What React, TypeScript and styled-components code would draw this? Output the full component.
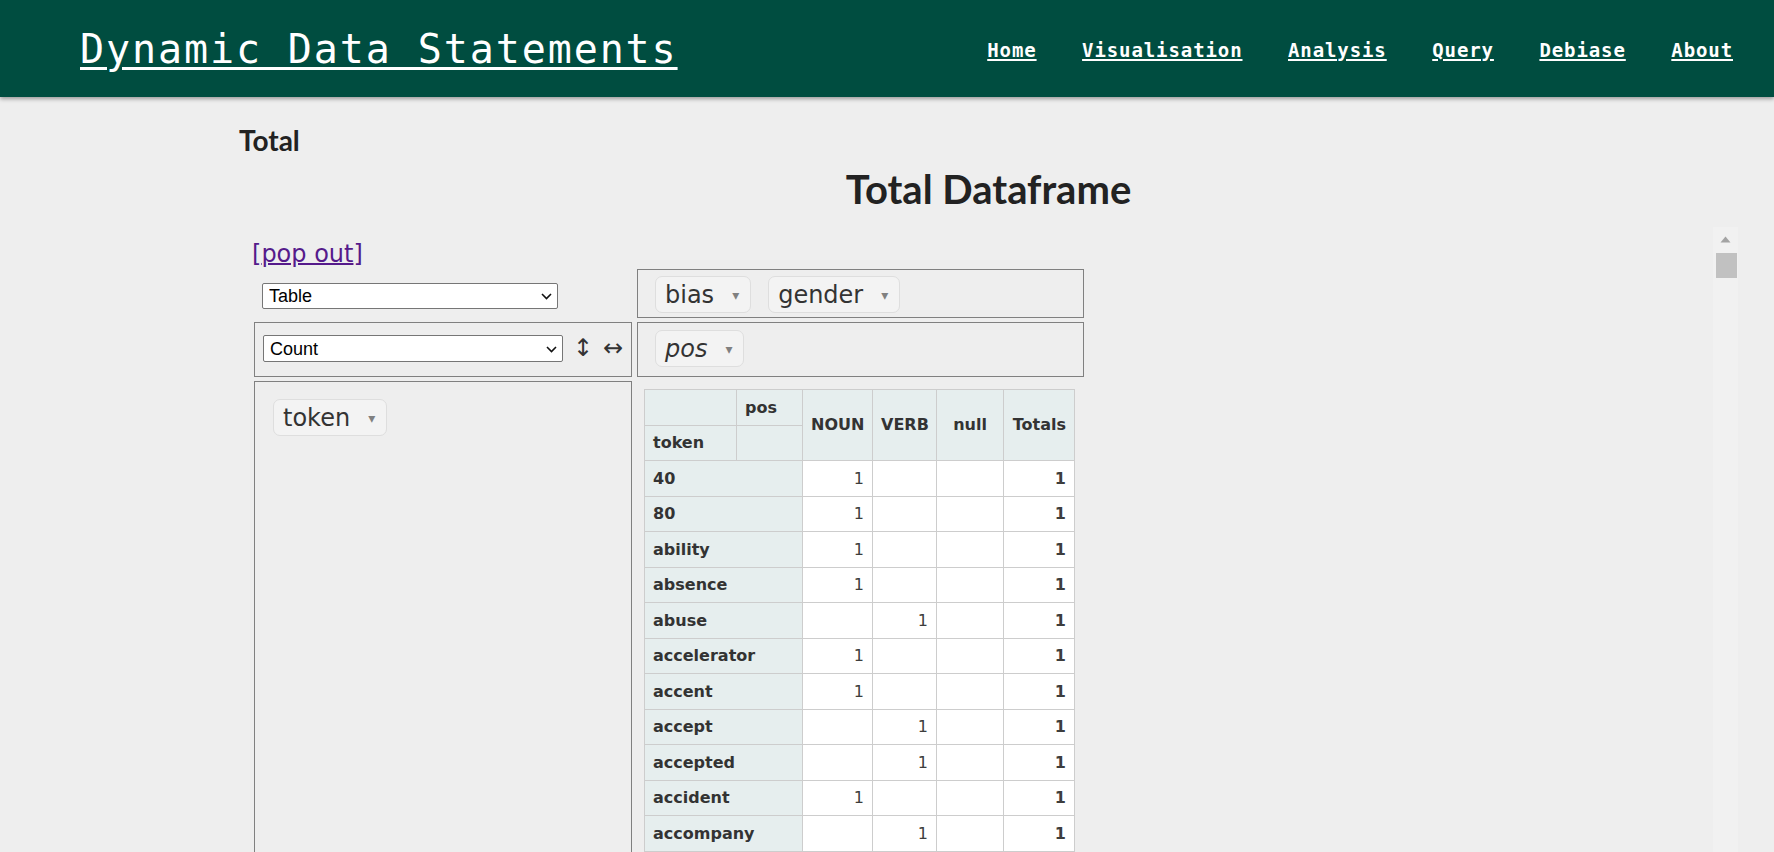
import React from "react"
import styled, { createGlobalStyle } from "styled-components"

type Pos = "NOUN" | "VERB" | "null"

const navLinks = ["Home", "Visualisation", "Analysis", "Query", "Debiase", "About"]

const rows: { token: string; pos: Pos }[] = [
  { token: "40", pos: "NOUN" },
  { token: "80", pos: "NOUN" },
  { token: "ability", pos: "NOUN" },
  { token: "absence", pos: "NOUN" },
  { token: "abuse", pos: "VERB" },
  { token: "accelerator", pos: "NOUN" },
  { token: "accent", pos: "NOUN" },
  { token: "accept", pos: "VERB" },
  { token: "accepted", pos: "VERB" },
  { token: "accident", pos: "NOUN" },
  { token: "accompany", pos: "VERB" },
  { token: "account", pos: "NOUN" },
  { token: "accurate", pos: "null" },
]

const posColumns: Pos[] = ["NOUN", "VERB", "null"]
const colWidths = [92, 66, 70, 64, 67, 71]

function App(): JSX.Element {
  return (
    <>
      <GlobalStyle />
      <Header>
        <Brand href="#">Dynamic Data Statements</Brand>
        <Nav>
          {navLinks.map((link) => (
            <NavLink key={link} href="#">
              {link}
            </NavLink>
          ))}
        </Nav>
      </Header>
      <Main>
        <SectionTitle>Total</SectionTitle>
        <FrameTitle>Total Dataframe</FrameTitle>
        <Frame>
          <FrameBody>
            <PopOut href="#">
              [<u>pop out</u>]
            </PopOut>
            <PivotGrid>
              <RendererCell>
                <Dropdown width={296} height={26} value="Table" options={["Table", "Table Heatmap", "Bar Chart"]} />
              </RendererCell>
              <AxisBox $pad="6px 17px" $gap={17}>
                <Pill label="bias" />
                <Pill label="gender" />
              </AxisBox>
              <AxisBox $pad="12px 8px">
                <ValsRow>
                  <Dropdown width={300} height={27} value="Count" options={["Count", "Count Unique Values", "Sum"]} />
                  <OrderToggle $offset={9}>↕</OrderToggle>
                  <OrderToggle $offset={8}>↔</OrderToggle>
                </ValsRow>
              </AxisBox>
              <AxisBox $pad="7px 17px" $gap={17}>
                <Pill label="pos" italic />
              </AxisBox>
              <AxisBox $pad="17px 18px" $vertical>
                <Pill label="token" />
              </AxisBox>
              <OutputCell>
                <PivotTable>
                  <colgroup>
                    {colWidths.map((w, i) => (
                      <Col key={i} $w={w} />
                    ))}
                  </colgroup>
                  <thead>
                    <tr>
                      <HeadCell />
                      <HeadCell>pos</HeadCell>
                      {posColumns.map((p) => (
                        <HeadCell key={p} rowSpan={2} $align="center">
                          {p}
                        </HeadCell>
                      ))}
                      <HeadCell rowSpan={2} $align="right">
                        Totals
                      </HeadCell>
                    </tr>
                    <tr>
                      <HeadCell>token</HeadCell>
                      <HeadCell />
                    </tr>
                  </thead>
                  <tbody>
                    {rows.map((row) => (
                      <tr key={row.token}>
                        <HeadCell colSpan={2}>{row.token}</HeadCell>
                        {posColumns.map((p) => (
                          <ValueCell key={p}>{row.pos === p ? 1 : ""}</ValueCell>
                        ))}
                        <ValueCell $total>1</ValueCell>
                      </tr>
                    ))}
                  </tbody>
                </PivotTable>
              </OutputCell>
            </PivotGrid>
          </FrameBody>
          <ScrollTrack>
            <ScrollButton>
              <svg width="11" height="7" viewBox="0 0 11 7">
                <path d="M5.5 0.5 L10.5 6.5 L0.5 6.5 Z" fill="#a3a3a3" />
              </svg>
            </ScrollButton>
            <ScrollThumb />
          </ScrollTrack>
        </Frame>
      </Main>
    </>
  )
}

function Pill({ label, italic }: { label: string; italic?: boolean }): JSX.Element {
  return (
    <PillItem $italic={italic}>
      {label}
      <Triangle>▾</Triangle>
    </PillItem>
  )
}

function Dropdown({
  width,
  height,
  value,
  options,
}: {
  width: number
  height: number
  value: string
  options: string[]
}): JSX.Element {
  return (
    <SelectWrap>
      <Select $w={width} $h={height} defaultValue={value}>
        {options.map((o) => (
          <option key={o}>{o}</option>
        ))}
      </Select>
      <Chevron width="11" height="7" viewBox="0 0 11 7">
        <path d="M1 1 L5.5 5.5 L10 1" fill="none" stroke="#111" strokeWidth="1.6" />
      </Chevron>
    </SelectWrap>
  )
}

const GlobalStyle = createGlobalStyle`
  html, body {
    margin: 0;
    padding: 0;
    background: #eeeeee;
    overflow: hidden;
  }
  body {
    font-family: "DejaVu Sans", Verdana, sans-serif;
    color: #333;
  }
`

const Header = styled.header`
  position: relative;
  z-index: 1;
  display: flex;
  align-items: center;
  justify-content: space-between;
  box-sizing: border-box;
  height: 97px;
  padding: 0 41px 0 80px;
  background: #004d40;
  box-shadow: 0 2px 4px rgba(0, 0, 0, 0.35);
`

const Brand = styled.a`
  font-family: "DejaVu Sans Mono", monospace;
  font-size: 40px;
  line-height: 46px;
  letter-spacing: 1.9px;
  color: #fff;
  text-decoration: underline;
  text-decoration-thickness: 2.5px;
  text-underline-offset: 4px;
`

const Nav = styled.nav`
  display: flex;
  gap: 45.5px;
  padding-top: 2px;
`

const NavLink = styled.a`
  font-family: "DejaVu Sans Mono", monospace;
  font-weight: bold;
  font-size: 19px;
  line-height: 22px;
  letter-spacing: 0.9px;
  color: #fff;
  text-decoration: underline;
  text-decoration-thickness: 2px;
  text-underline-offset: 2px;
`

const Main = styled.main`
  width: 1499px;
  margin-left: 239px;
`

const SectionTitle = styled.h2`
  margin: 26px 0 0;
  font-family: Lato, "Open Sans", sans-serif;
  font-weight: 700;
  font-size: 28px;
  line-height: 34px;
  color: #222;
`

const FrameTitle = styled.h1`
  margin: 8px 0 0;
  font-family: Lato, "Open Sans", sans-serif;
  font-weight: 700;
  font-size: 40px;
  line-height: 48px;
  text-align: center;
  color: #222;
`

const Frame = styled.div`
  display: flex;
  height: 700px;
  margin-top: 14px;
`

const FrameBody = styled.div`
  flex: 1;
  overflow: hidden;
  padding: 13px 0 0 13px;
`

const PopOut = styled.a`
  display: block;
  font-size: 24px;
  line-height: 28px;
  color: #551a8b;
  text-decoration: none;

  u {
    text-decoration-thickness: 2px;
  }
`

const PivotGrid = styled.div`
  display: grid;
  grid-template-columns: 378px 447px;
  grid-template-rows: 49px 55px auto;
  column-gap: 5px;
  row-gap: 4px;
  margin: 1px 0 0 2px;
`

const RendererCell = styled.div`
  padding: 14px 0 0 8px;
`

const AxisBox = styled.div<{ $pad: string; $gap?: number; $vertical?: boolean }>`
  display: flex;
  flex-direction: ${(p) => (p.$vertical ? "column" : "row")};
  align-items: flex-start;
  gap: ${(p) => p.$gap ?? 0}px;
  box-sizing: border-box;
  padding: ${(p) => p.$pad};
  border: 1px solid gray;
  background: #eeeeee;
`

const ValsRow = styled.div`
  display: flex;
  align-items: center;
`

const OrderToggle = styled.span<{ $offset: number }>`
  display: inline-block;
  width: 22px;
  margin-left: ${(p) => p.$offset}px;
  font-size: 24px;
  line-height: 27px;
  text-align: center;
  color: #333;
  cursor: pointer;
`

const OutputCell = styled.div`
  padding: 8px 0 0 7px;
`

const PillItem = styled.span<{ $italic?: boolean }>`
  display: inline-flex;
  align-items: center;
  padding: 3.5px 11px 3.5px 9px;
  border: 1px solid #dedede;
  border-radius: 7px;
  background: #f3f3f3;
  font-size: 24px;
  line-height: 28px;
  font-style: ${(p) => (p.$italic ? "italic" : "normal")};
  color: #333;
  white-space: nowrap;
  cursor: move;
`

const Triangle = styled.span`
  margin-left: 18px;
  font-size: 14px;
  font-style: normal;
  color: grey;
`

const SelectWrap = styled.span`
  position: relative;
  display: inline-block;
`

const Select = styled.select<{ $w: number; $h: number }>`
  appearance: none;
  display: block;
  box-sizing: border-box;
  width: ${(p) => p.$w}px;
  height: ${(p) => p.$h}px;
  padding: 0 24px 0 6px;
  border: 1px solid #767676;
  border-radius: 2px;
  background: #fff;
  font-family: "Liberation Sans", Arial, sans-serif;
  font-size: 18px;
  color: #000;
`

const Chevron = styled.svg`
  position: absolute;
  right: 6px;
  top: 50%;
  margin-top: -3px;
  pointer-events: none;
`

const PivotTable = styled.table`
  table-layout: fixed;
  width: 430px;
  border-collapse: collapse;
  font-family: "DejaVu Sans", Verdana, sans-serif;
  font-size: 16px;
  line-height: 19.5px;
  text-align: left;
`

const Col = styled.col<{ $w: number }>`
  width: ${(p) => p.$w}px;
`

const HeadCell = styled.th<{ $align?: string }>`
  padding: 7.5px 8px;
  border: 1px solid #cdcdcd;
  background: #e6eeee;
  font-weight: bold;
  color: #333;
  text-align: ${(p) => p.$align ?? "left"};
  vertical-align: middle;
  white-space: nowrap;
`

const ValueCell = styled.td<{ $total?: boolean }>`
  padding: 7.5px 8px;
  border: 1px solid #cdcdcd;
  background: #fff;
  font-weight: ${(p) => (p.$total ? "bold" : "normal")};
  color: #3d3d3d;
  text-align: right;
  vertical-align: top;
`

const ScrollTrack = styled.div`
  display: flex;
  flex: 0 0 25px;
  flex-direction: column;
  align-items: center;
  background: #f1f1f1;
`

const ScrollButton = styled.div`
  display: flex;
  align-items: center;
  justify-content: center;
  width: 25px;
  height: 25px;
`

const ScrollThumb = styled.div`
  width: 21px;
  height: 25px;
  margin: 1px 0 0 1px;
  background: #c1c1c1;
`

export default App
